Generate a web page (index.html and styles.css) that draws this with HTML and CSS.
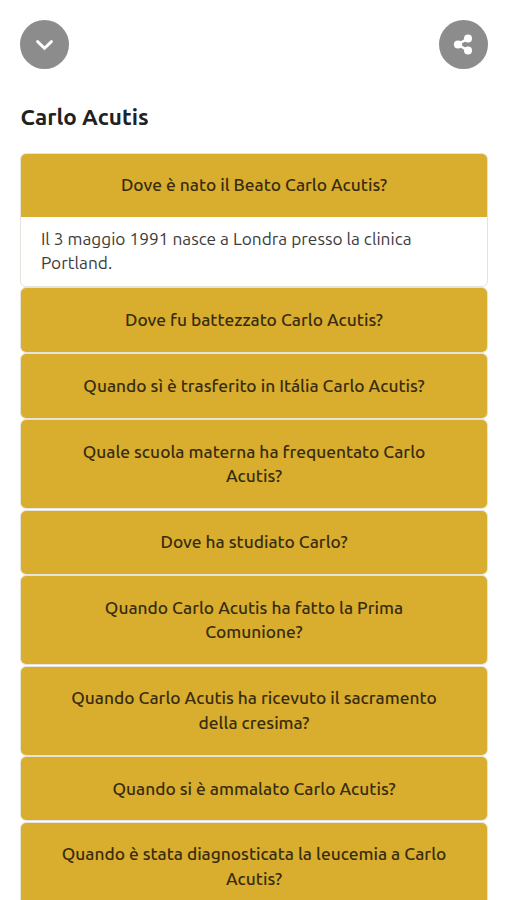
FILE: index.html
```html
<!DOCTYPE html>
<html lang="it">
<head>
    <meta charset="UTF-8">
    <meta name="viewport" content="width=device-width, initial-scale=1">
    <title>Carlo Acutis</title>
    <link rel="stylesheet" href="styles.css">
</head>
<body>
    <div class="topbar">
        <button class="round-btn" aria-label="Chiudi">
            <svg width="49" height="49" viewBox="0 0 49 49">
                <path d="M17.6 21.6l6.9 6.6 6.9-6.6" fill="none" stroke="#fff" stroke-width="2.9" stroke-linecap="round" stroke-linejoin="miter"/>
            </svg>
        </button>
        <button class="round-btn" aria-label="Condividi">
            <svg width="49" height="49" viewBox="0 0 49 49">
                <path d="M29 18.4l-10.2 6.1L29 30.6" fill="none" stroke="#fff" stroke-width="2.5"/>
                <circle cx="19" cy="24.5" r="4.1" fill="#fff"/>
                <circle cx="29" cy="18.5" r="4" fill="#fff"/>
                <circle cx="29" cy="30.5" r="4" fill="#fff"/>
            </svg>
        </button>
    </div>

    <h1 class="title">Carlo Acutis</h1>

    <div class="accordion">
        <div class="item open">
            <button class="question">Dove è nato il Beato Carlo Acutis?</button>
            <div class="answer">Il 3 maggio 1991 nasce a Londra presso la clinica<br>Portland.</div>
        </div>
        <div class="item"><button class="question">Dove fu battezzato Carlo Acutis?</button></div>
        <div class="item"><button class="question">Quando sì è trasferito in Itália Carlo Acutis?</button></div>
        <div class="item"><button class="question">Quale scuola materna ha frequentato Carlo<br>Acutis?</button></div>
        <div class="item"><button class="question">Dove ha studiato Carlo?</button></div>
        <div class="item"><button class="question">Quando Carlo Acutis ha fatto la Prima<br>Comunione?</button></div>
        <div class="item"><button class="question">Quando Carlo Acutis ha ricevuto il sacramento<br>della cresima?</button></div>
        <div class="item"><button class="question">Quando si è ammalato Carlo Acutis?</button></div>
        <div class="item"><button class="question">Quando è stata diagnosticata la leucemia a Carlo<br>Acutis?</button></div>
    </div>
</body>
</html>
```

FILE: styles.css
```css
* {
    box-sizing: border-box;
}
html {
    overflow: hidden;
}
body {
    margin: 0;
    height: 900px;
    overflow: hidden;
    padding: 20px 19.4px 0 20.4px;
    background: #fff;
    color: #212529;
    font-family: Ubuntu, "Noto Sans", sans-serif;
}
.topbar {
    display: flex;
    justify-content: space-between;
}
.round-btn {
    width: 49px;
    height: 49px;
    padding: 0;
    border: none;
    border-radius: 50%;
    background: #8c8c8c;
}
.round-btn svg {
    display: block;
}
.title {
    margin: 33.5px 0 0;
    font-size: 22.5px;
    font-weight: 700;
    line-height: 28px;
    color: #212121;
}
.accordion {
    margin-top: 22px;
}
.item {
    margin-bottom: 0.5px;
    border: 1px solid #e6e3dc;
    border-radius: 6px;
    overflow: hidden;
}
.question {
    display: block;
    width: 100%;
    padding: 19.5px 10px;
    border: none;
    background: #d9ad2d;
    color: #372c10;
    font-family: inherit;
    font-size: 17.35px;
    font-weight: 500;
    line-height: 24.4px;
    text-align: center;
    white-space: nowrap;
}
.answer {
    padding: 10px 19.5px 10.2px;
    font-size: 17.3px;
    line-height: 24.4px;
    color: #3c3c3c;
    white-space: nowrap;
}
```
